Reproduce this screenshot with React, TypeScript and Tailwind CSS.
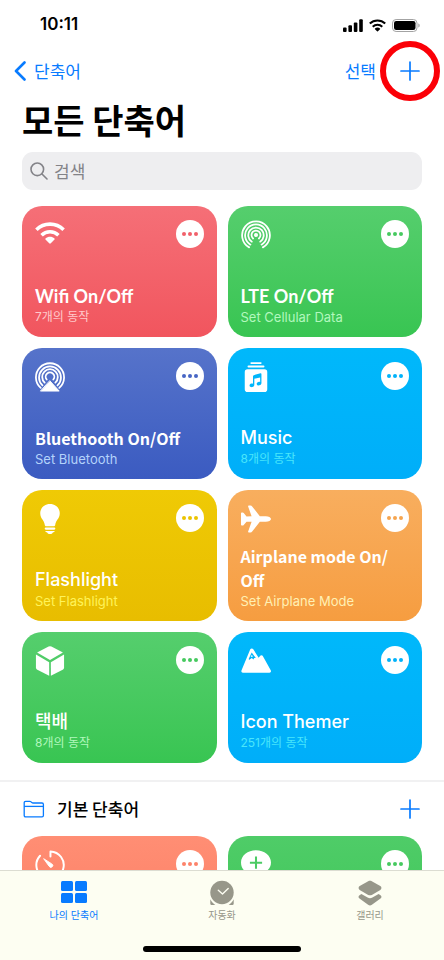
import React, { useState } from "react";
import clsx from "clsx";

interface Shortcut {
  id: string;
  title: string;
  subtitle: string;
  icon: React.ReactNode;
  // background + colour of the dots in the menu button
  card: string;
  titleClass: string;
  subtitleClass: string;
}

const WifiIcon = ({ className, viewBox }: { className?: string; viewBox: string }) => (
  <svg viewBox={viewBox} className={className} fill="none" stroke="currentColor" strokeWidth="3.8">
    <path d="M1.500 9.300C9.500 1.400 22.500 1.400 30.500 9.300" />
    <path d="M7 15.200c5-4.800 13-4.800 18 0" />
    <path d="M15.200 23.900l-4-4c-.4-.4-.4-.8 0-1.200 2.700-2.300 6.900-2.300 9.600 0 .4.4.4.8 0 1.200l-4 4c-.5.5-1.100.5-1.600 0z" fill="currentColor" stroke="none" />
  </svg>
);

const CellularIcon = () => (
  <svg viewBox="0 0 32 32" className="size-[30px]" fill="none" stroke="currentColor" strokeWidth="1.9" strokeLinecap="round">
    <circle cx="16" cy="16" r="2.2" fill="currentColor" stroke="none" />
    <path d="M12.900 19.700a4.800 4.800 0 1 1 6.200 0" />
    <path d="M11.500 23.100a8.200 8.200 0 1 1 9 0" />
    <path d="M10.100 26.300a11.600 11.600 0 1 1 11.800 0" />
    <path d="M8.700 29.200a14.800 14.800 0 1 1 14.600 0" />
  </svg>
);

const AirplayIcon = () => (
  <svg viewBox="0 0 32 32" className="size-[30px]" fill="none" stroke="currentColor" strokeWidth="1.9" strokeLinecap="round">
    <path d="M12.500 18.700a4.600 4.600 0 1 1 7 0" />
    <path d="M10.300 22a8.300 8.300 0 1 1 11.400 0" />
    <path d="M8 25a11.700 11.700 0 1 1 16 0" />
    <path d="M6.100 27.600a15 15 0 1 1 19.800 0" />
    <path d="M16 20.200l9.800 10.800H6.200z" fill="currentColor" strokeWidth="1" strokeLinejoin="round" />
  </svg>
);

const MusicIcon = () => (
  <svg viewBox="0 0 32 32" className="size-[30px]" fill="currentColor">
    <rect x="10" y="0.200" width="12" height="1.800" rx="0.900" />
    <rect x="7" y="3.600" width="18" height="2.200" rx="1" />
    <path
      fillRule="evenodd"
      d="M7 7.600h18a3 3 0 0 1 3 3V29a3 3 0 0 1-3 3H7a3 3 0 0 1-3-3V10.600a3 3 0 0 1 3-3zM12.800 15.200v7.900c-.5-.3-1.200-.3-1.800-.1-1.300.4-2.100 1.500-1.800 2.600.3 1 1.600 1.500 2.900 1.100 1.300-.4 2.100-1.400 2.100-2.500v-6.300l6.200-1.500v4.900c-.5-.3-1.200-.3-1.800-.1-1.300.4-2.100 1.500-1.800 2.500.3 1.100 1.600 1.600 2.900 1.200 1.300-.4 2.100-1.400 2.100-2.500v-9.600c0-.5-.4-.9-1-.7l-7.200 1.900c-.5.1-.8.600-.8 1.200z"
    />
  </svg>
);

const BulbIcon = () => (
  <svg viewBox="0 0 32 32" className="size-[30px]" fill="currentColor">
    <path d="M16 0C9.900 0 5.600 4.400 5.600 9.900c0 6 4.300 7.300 4.800 12.300.1 1 .6 1.600 1.600 1.600h8c1 0 1.500-.6 1.600-1.600.5-5 4.800-6.300 4.800-12.300C26.400 4.400 22.100 0 16 0z" />
    <rect x="10.300" y="25" width="11.400" height="2.400" rx="1.200" />
    <path d="M11 28.700h10c-.2 1.100-1 1.500-2 1.600-.5 1-1.600 1.700-3 1.700s-2.500-.7-3-1.700c-1-.1-1.800-.5-2-1.600z" />
  </svg>
);

const AirplaneIcon = () => (
  <svg viewBox="0 0 32 32" className="size-[30px]" fill="currentColor">
    <path d="M32 16c0 1.500-2.500 2.900-5.600 2.900h-6.300l-8.200 10.500c-.5.700-1 1-1.800 1H8.300c-.6 0-.9-.5-.7-1.100l3.700-10.400-5.400-.1-3 3.600c-.3.400-.7.600-1.200.6H.8c-.5 0-.8-.4-.8-.9V9.900C0 9.400.3 9 .8 9h.9c.5 0 .9.200 1.200.6l3 3.600 5.400-.1L7.600 2.700c-.2-.6.1-1.100.7-1.100h1.800c.8 0 1.300.3 1.800 1l8.200 10.500h6.300c3.100 0 5.600 1.400 5.600 2.900z" />
  </svg>
);

const BoxIcon = () => (
  <svg viewBox="0 0 32 32" className="size-[30px]" fill="currentColor">
    <path d="M14.500.6a3 3 0 0 1 3 0L29.800 7 16 14.800 2.200 7z" />
    <path d="M1 9l14.100 8.200v14.600L2.500 25.300A2.900 2.900 0 0 1 1 22.800z" />
    <path d="M31 9l-14.100 8.200v14.600l12.600-6.500a2.900 2.900 0 0 0 1.500-2.500z" />
  </svg>
);

const MountainIcon = () => (
  <svg viewBox="0 0 32 32" className="size-[30px]" fill="currentColor">
    <path
      fillRule="evenodd"
      d="M9.900 3.500c.7-1.200 2.500-1.200 3.200 0l5.700 8.900 1.700-2c.7-.9 2-.9 2.600.1l8.600 15.400c.7 1.300 0 2.500-1.300 2.500H2C.7 28.400 0 27.200.6 25.900zM11.400 6.800l-3.100 6.700.2 1.500 3-2.300 1.700 1.600.9-1.500 1.700.1zM11.500 9.200l1.300 2.100-2.500.5z"
    />
  </svg>
);

const TimerIcon = () => (
  <svg viewBox="0 0 32 32" className="size-[30px]" fill="none" stroke="currentColor" strokeWidth="2.100" strokeLinecap="round" strokeLinejoin="round">
    <path d="M16.500 7V1.500A14.600 14.600 0 1 1 5.400 6.100" />
    <path d="M9.600 9.500l8.300 5.300a2 2 0 1 1-2.700 2.800z" fill="currentColor" strokeWidth="1" />
  </svg>
);

const BubbleIcon = () => (
  <svg viewBox="0 0 32 32" className="size-[30px]" fill="currentColor">
    <path fillRule="evenodd" d="M16 .2c8.800 0 16 5.700 16 13s-7.200 13-16 13c-1.200 0-2.400-.1-3.500-.3-2 2-4.700 3.300-7.600 3.500 1.300-1.500 1.700-3.200 1.500-5.200C2.500 21.900 0 17.900 0 13.200 0 5.900 7.200.2 16 .2zM14.900 7v5.400H9.500v2.200h5.400V20h2.200v-5.400h5.400v-2.200h-5.400V7z" />
  </svg>
);

const PlusIcon = () => (
  <svg viewBox="0 0 20 20" className="size-5" fill="none" stroke="currentColor" strokeWidth="1.700" strokeLinecap="round">
    <path d="M10 1v18M1 10h18" />
  </svg>
);

const shortcuts: Shortcut[] = [
  {
    id: "wifi",
    title: "Wifi On/Off",
    subtitle: "7개의 동작",
    icon: <WifiIcon viewBox="0 -1 32 32" className="size-[30px]" />,
    card: "from-[#f56f77] to-[#f1555e] text-[#f1606a]",
    titleClass: "font-['Lato','Noto_Sans_CJK_KR',sans-serif] text-lg/6 font-bold",
    subtitleClass: "text-[#ffc9cb] text-xs",
  },
  {
    id: "lte",
    title: "LTE On/Off",
    subtitle: "Set Cellular Data",
    icon: <CellularIcon />,
    card: "from-[#55ce6d] to-[#38c552] text-[#46c95f]",
    titleClass: "font-['Lato','Noto_Sans_CJK_KR',sans-serif] text-lg/6 font-bold",
    subtitleClass: "text-[#b2f8bd] text-[13px]",
  },
  {
    id: "bluetooth",
    title: "Bluethooth On/Off",
    subtitle: "Set Bluetooth",
    icon: <AirplayIcon />,
    card: "from-[#5673ca] to-[#3b5bc1] text-[#4766c5]",
    titleClass: "font-['Noto_Sans_CJK_KR',sans-serif] text-base/6 font-bold",
    subtitleClass: "text-[#b4d3fb] text-[13px]",
  },
  {
    id: "music",
    title: "Music",
    subtitle: "8개의 동작",
    icon: <MusicIcon />,
    card: "from-[#00b8fb] to-[#00aef9] text-[#00b2fa]",
    titleClass: "text-lg/6 font-medium",
    subtitleClass: "text-[#4ae6fb] text-xs",
  },
  {
    id: "flashlight",
    title: "Flashlight",
    subtitle: "Set Flashlight",
    icon: <BulbIcon />,
    card: "from-[#efca05] to-[#e8bd00] text-[#ebc300]",
    titleClass: "text-lg/6 font-medium",
    subtitleClass: "text-[#fff35a] text-[13px]",
  },
  {
    id: "airplane",
    title: "Airplane mode On/Off",
    subtitle: "Set Airplane Mode",
    icon: <AirplaneIcon />,
    card: "from-[#f8ae5e] to-[#f69d40] text-[#f6a54f]",
    titleClass: "font-['Noto_Sans_CJK_KR',sans-serif] text-base/6 font-bold",
    subtitleClass: "text-[#fff0b4] text-[13px]",
  },
  {
    id: "parcel",
    title: "택배",
    subtitle: "8개의 동작",
    icon: <BoxIcon />,
    card: "from-[#55ce6d] to-[#38c552] text-[#46c95f]",
    titleClass: "text-lg/6 font-medium",
    subtitleClass: "text-[#b2f8bd] text-xs",
  },
  {
    id: "themer",
    title: "Icon Themer",
    subtitle: "251개의 동작",
    icon: <MountainIcon />,
    card: "from-[#00b8fb] to-[#00aef9] text-[#00b2fa]",
    titleClass: "text-lg/6 font-medium",
    subtitleClass: "text-[#4ae6fb] text-xs",
  },
];

const starterShortcuts: Shortcut[] = [
  {
    id: "timer",
    title: "",
    subtitle: "",
    icon: <TimerIcon />,
    card: "from-[#ff8e74] to-[#fb7a60] text-[#fd826a]",
    titleClass: "",
    subtitleClass: "",
  },
  {
    id: "message",
    title: "",
    subtitle: "",
    icon: <BubbleIcon />,
    card: "from-[#4fcc68] to-[#38c552] text-[#46c95f]",
    titleClass: "",
    subtitleClass: "",
  },
];

const tabs = [
  {
    id: "mine",
    label: "나의 단축어",
    icon: (
      <svg viewBox="0 0 28 28" className="size-7" fill="currentColor">
        <rect x="1" y="3" width="12" height="10" rx="1.500" />
        <rect x="15" y="3" width="12" height="10" rx="1.500" />
        <rect x="1" y="15" width="12" height="10" rx="1.500" />
        <rect x="15" y="15" width="12" height="10" rx="1.500" />
      </svg>
    ),
  },
  {
    id: "automation",
    label: "자동화",
    icon: (
      <svg viewBox="0 0 28 28" className="size-7" fill="currentColor">
        <path d="M2.300 21.300c1.200 2.300 2.900 4.300 5 5.600H3.400c-.7 0-1.100-.4-1.100-1.100zM25.700 21.300c-1.200 2.300-2.900 4.300-5 5.600h3.900c.7 0 1.100-.4 1.100-1.100z" />
        <circle cx="14" cy="14.500" r="11.700" />
        <path d="M10.300 12.300l4.200 3.700 5.700-5.400" fill="none" stroke="#fdfef2" strokeWidth="1.400" strokeLinecap="round" strokeLinejoin="round" />
      </svg>
    ),
  },
  {
    id: "gallery",
    label: "갤러리",
    icon: (
      <svg viewBox="0 0 28 28" className="size-7" fill="currentColor">
        <path d="M12.200 3.200c1.200-.6 2.400-.6 3.600 0l8.500 4.900c1.500.9 1.500 2.900 0 3.800l-8.500 5c-1.200.6-2.400.6-3.600 0l-8.500-5c-1.500-.9-1.500-2.900 0-3.800z" />
        <path d="M5.400 16l6.200 3.600c1.600.9 3.200.9 4.800 0l6.200-3.600 1.900 1.200c1.300.9 1.300 2.500 0 3.400l-8.600 6.200c-1.200.8-2.600.8-3.800 0l-8.600-6.200c-1.300-.9-1.300-2.500 0-3.400z" />
      </svg>
    ),
  },
];

const ShortcutCard = ({ shortcut }: { shortcut: Shortcut }) => (
  <article
    className={clsx(
      "flex h-[131px] flex-col justify-between rounded-[20px] bg-linear-to-b px-[13px] pt-3.5 pb-3",
      shortcut.card
    )}
  >
    <div className="flex items-start justify-between">
      <span className="text-white">{shortcut.icon}</span>
      <button aria-label="더보기" className="flex size-7 items-center justify-center gap-0.5 rounded-full bg-white">
        <span className="size-1 rounded-full bg-current" />
        <span className="size-1 rounded-full bg-current" />
        <span className="size-1 rounded-full bg-current" />
      </button>
    </div>
    {shortcut.title && (
      <div className="flex flex-col gap-px">
        <h2 className={clsx("text-white", shortcut.titleClass)}>
          {/* allow a line break after the slash */}
          {shortcut.title.split("/").map((part, i) => (
            <React.Fragment key={part}>
              {i > 0 && <>/<wbr /></>}
              {part}
            </React.Fragment>
          ))}
        </h2>
        <p className={clsx("leading-4", shortcut.subtitleClass)}>{shortcut.subtitle}</p>
      </div>
    )}
  </article>
);

const StatusBar = () => (
  <div className="flex h-[50px] shrink-0 items-center justify-between pr-6 pl-10">
    <span className="text-[17px] font-semibold">10:11</span>
    <div className="flex items-center gap-1.5">
      <svg viewBox="0 0 20 13" className="h-[13px] w-5" fill="currentColor">
        <rect x="0" y="8.500" width="3.600" height="4.500" rx="1" />
        <rect x="5.400" y="6.300" width="3.600" height="6.700" rx="1" />
        <rect x="10.800" y="3.500" width="3.600" height="9.500" rx="1" />
        <rect x="16.200" y="0.300" width="3.600" height="12.700" rx="1" />
      </svg>
      <WifiIcon viewBox="0 1 32 24" className="h-[13px] w-[17px]" />
      <svg viewBox="0 0 28 13" className="h-[13px] w-7" fill="none">
        <rect x="0.500" y="0.500" width="24.500" height="12" rx="3.600" stroke="#a3a3a3" />
        <rect x="2" y="2" width="21.500" height="9" rx="2.200" fill="currentColor" />
        <path d="M26.300 4.500v4c.9-.4 1.400-1.100 1.400-2s-.5-1.600-1.400-2z" fill="#a3a3a3" />
      </svg>
    </div>
  </div>
);

const App = () => {
  const [query, setQuery] = useState("");
  const [activeTab, setActiveTab] = useState("mine");

  return (
    <div className="flex h-screen flex-col bg-white font-['Inter','Noto_Sans_CJK_KR',sans-serif] text-black">
      <StatusBar />

      <nav className="flex h-[42px] shrink-0 items-center justify-between pr-6 pl-3.5 font-['Noto_Sans_CJK_KR',sans-serif] text-[17px] text-[#087bff]">
        <a href="#shortcuts" className="flex items-center gap-2">
          <svg viewBox="0 0 12 20" className="h-5 w-3" fill="none" stroke="currentColor" strokeWidth="2.600" strokeLinecap="round" strokeLinejoin="round">
            <path d="M10.500 1.500L2 10l8.500 8.500" />
          </svg>
          단축어
        </a>
        <div className="flex items-center gap-6">
          <button>선택</button>
          <button aria-label="단축어 추가" className="relative">
            <PlusIcon />
            <span className="pointer-events-none absolute -inset-5 rounded-full border-[6px] border-[#fb0007]" />
          </button>
        </div>
      </nav>

      <main className="min-h-0 flex-1 overflow-hidden">
        <div className="px-[22px] pt-1.5">
          <h1 className="font-['Noto_Sans_CJK_KR',sans-serif] text-[34px]/[44px] font-bold">모든 단축어</h1>

          <label className="mt-2.5 flex h-[38px] items-center gap-1.5 rounded-[11px] bg-[#eeeef0] px-2 text-[#838388]">
            <svg viewBox="0 0 18 18" className="size-[18px]" fill="none" stroke="currentColor" strokeWidth="1.600" strokeLinecap="round">
              <circle cx="7.300" cy="7.300" r="6.300" />
              <path d="M12 12l5 5" />
            </svg>
            <input
              type="text"
              aria-label="검색"
              placeholder="검색"
              value={query}
              onChange={(e) => setQuery(e.target.value)}
              className="min-w-0 flex-1 bg-transparent font-['Noto_Sans_CJK_KR',sans-serif] text-[17px] outline-none placeholder:text-[#838388]"
            />
          </label>

          <div className="mt-4 grid grid-cols-2 gap-[11px]">
            {shortcuts.map((shortcut) => (
              <ShortcutCard key={shortcut.id} shortcut={shortcut} />
            ))}
          </div>
        </div>

        {/* Starter shortcuts folder */}
        <section className="mt-[17px] border-t-2 border-[#f1f1f2] px-[22px]">
          <div className="flex h-[54px] items-center justify-between pr-0.5 text-[#087bff]">
            <div className="flex items-center gap-[11px]">
              <svg viewBox="0 0 24 18" className="h-[18px] w-6" fill="none" stroke="currentColor" strokeWidth="1.300" strokeLinejoin="round">
                <path d="M3.600 16.800c-.9 0-1.400-.5-1.400-1.400V2.800c0-1 .5-1.500 1.500-1.500h4.100c.5 0 .9.200 1.300.6l.7.700c.4.3.7.400 1.200.400h9c.9 0 1.400.5 1.400 1.400v11c0 .9-.5 1.400-1.400 1.400z" />
                <path d="M2.200 6.400h19.200" />
              </svg>
              <h2 className="font-['Noto_Sans_CJK_KR',sans-serif] text-[17px] font-medium text-black">기본 단축어</h2>
            </div>
            <button aria-label="기본 단축어에 추가">
              <PlusIcon />
            </button>
          </div>
          <div className="grid grid-cols-2 gap-[11px]">
            {starterShortcuts.map((shortcut) => (
              <ShortcutCard key={shortcut.id} shortcut={shortcut} />
            ))}
          </div>
        </section>
      </main>

      <footer className="shrink-0 border-t border-[#dcddd2] bg-[#fdfef2] pt-[7px]">
        <div className="grid grid-cols-3">
          {tabs.map((tab) => (
            <button
              key={tab.id}
              onClick={() => setActiveTab(tab.id)}
              className={clsx(
                "flex flex-col items-center gap-0.5 text-[10px]/[14px]",
                activeTab === tab.id ? "text-[#087bff]" : "text-[#97978a]"
              )}
            >
              {tab.icon}
              {tab.label}
            </button>
          ))}
        </div>
        <div className="mx-auto mt-6 mb-2 h-1.5 w-[158px] rounded-full bg-black" />
      </footer>
    </div>
  );
};

export default App;
